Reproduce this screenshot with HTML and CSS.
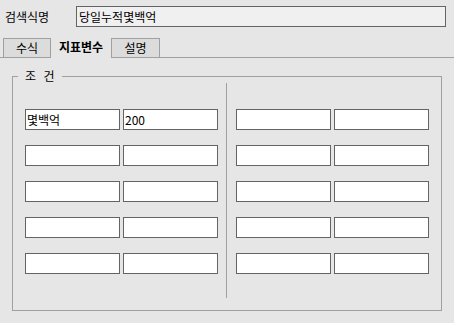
FILE: index.html
```html
<!DOCTYPE html>
<html lang="ko">
<head>
  <meta charset="UTF-8">
  <meta name="viewport" content="width=device-width, initial-scale=1.0">
  <link rel="stylesheet" href="styles.css">
  <title>검색식</title>
</head>
<body>
  <div class="search-row">
    <label class="search-label">검색식명</label>
    <input class="search-input" type="text" value="당일누적몇백억">
  </div>

  <div class="tabs">
    <div class="tab">수식</div>
    <div class="tab tab-active">지표변수</div>
    <div class="tab tab-last">설명</div>
  </div>

  <div class="group">
    <span class="group-title">조 건</span>
    <div class="group-body">
      <div class="field-grid">
        <input class="field" type="text" value="몇백억">
        <input class="field" type="text" value="200">
        <input class="field" type="text">
        <input class="field" type="text">
        <input class="field" type="text">
        <input class="field" type="text">
        <input class="field" type="text">
        <input class="field" type="text">
        <input class="field" type="text">
        <input class="field" type="text">
      </div>
      <div class="divider"></div>
      <div class="field-grid">
        <input class="field" type="text">
        <input class="field" type="text">
        <input class="field" type="text">
        <input class="field" type="text">
        <input class="field" type="text">
        <input class="field" type="text">
        <input class="field" type="text">
        <input class="field" type="text">
        <input class="field" type="text">
        <input class="field" type="text">
      </div>
    </div>
  </div>
</body>
</html>
```

FILE: styles.css
```css
body {
  font-family: "Noto Sans CJK KR", "Liberation Sans", sans-serif;
  font-size: 12px;
  color: #000000;
  margin: 0;
  width: 454px;
  height: 323px;
  background-color: #e6e6e6;
}

.search-row {
  display: flex;
  align-items: center;
  padding: 6px 0 0 5px;
}

.search-label {
  width: 71px;
  line-height: 14px;
}

.search-input {
  width: 370px;
  height: 21px;
  box-sizing: border-box;
  margin: 0;
  padding: 0 2px;
  border: 1px solid #646464;
  background-color: #f0f0f0;
  font-family: "Noto Sans CJK KR", "Liberation Sans", sans-serif;
  font-size: 12px;
  color: #000000;
  outline: none;
}

.tabs {
  display: flex;
  margin-top: 11px;
  padding-left: 3px;
  border-bottom: 1px solid #a0a0a0;
}

.tab {
  width: 48px;
  height: 19px;
  box-sizing: border-box;
  border: 1px solid #a0a0a0;
  border-bottom: none;
  background-color: #dcdcdc;
  text-align: center;
  line-height: 17px;
}

.tab-active {
  width: 60px;
  border: none;
  margin-bottom: -1px;
  height: 20px;
  background-color: #e6e6e6;
  font-weight: bold;
}

.tab-last {
  width: 49px;
}

.group {
  position: relative;
  width: 430px;
  height: 235px;
  box-sizing: border-box;
  margin: 18px 0 0 12px;
  border: 1px solid #a0a0a0;
}

.group-title {
  position: absolute;
  top: -8px;
  left: 5px;
  padding: 0 6px 0 7px;
  line-height: 14px;
  letter-spacing: 2px;
  background-color: #e6e6e6;
}

.group-body {
  display: flex;
  padding: 6px 12px 11px 12px;
}

.field-grid {
  display: grid;
  grid-template-columns: 95px 95px;
  grid-auto-rows: 21px;
  gap: 15px 3px;
  padding-top: 26px;
  align-content: start;
}

.divider {
  width: 1px;
  height: 215px;
  margin: 0 9px 0 8px;
  background-color: #a0a0a0;
}

.field {
  width: 95px;
  height: 21px;
  box-sizing: border-box;
  margin: 0;
  padding: 0 1px;
  border: 1px solid #646464;
  background-color: #ffffff;
  font-family: "Noto Sans CJK KR", "Liberation Sans", sans-serif;
  font-size: 12px;
  color: #000000;
  outline: none;
}
```
